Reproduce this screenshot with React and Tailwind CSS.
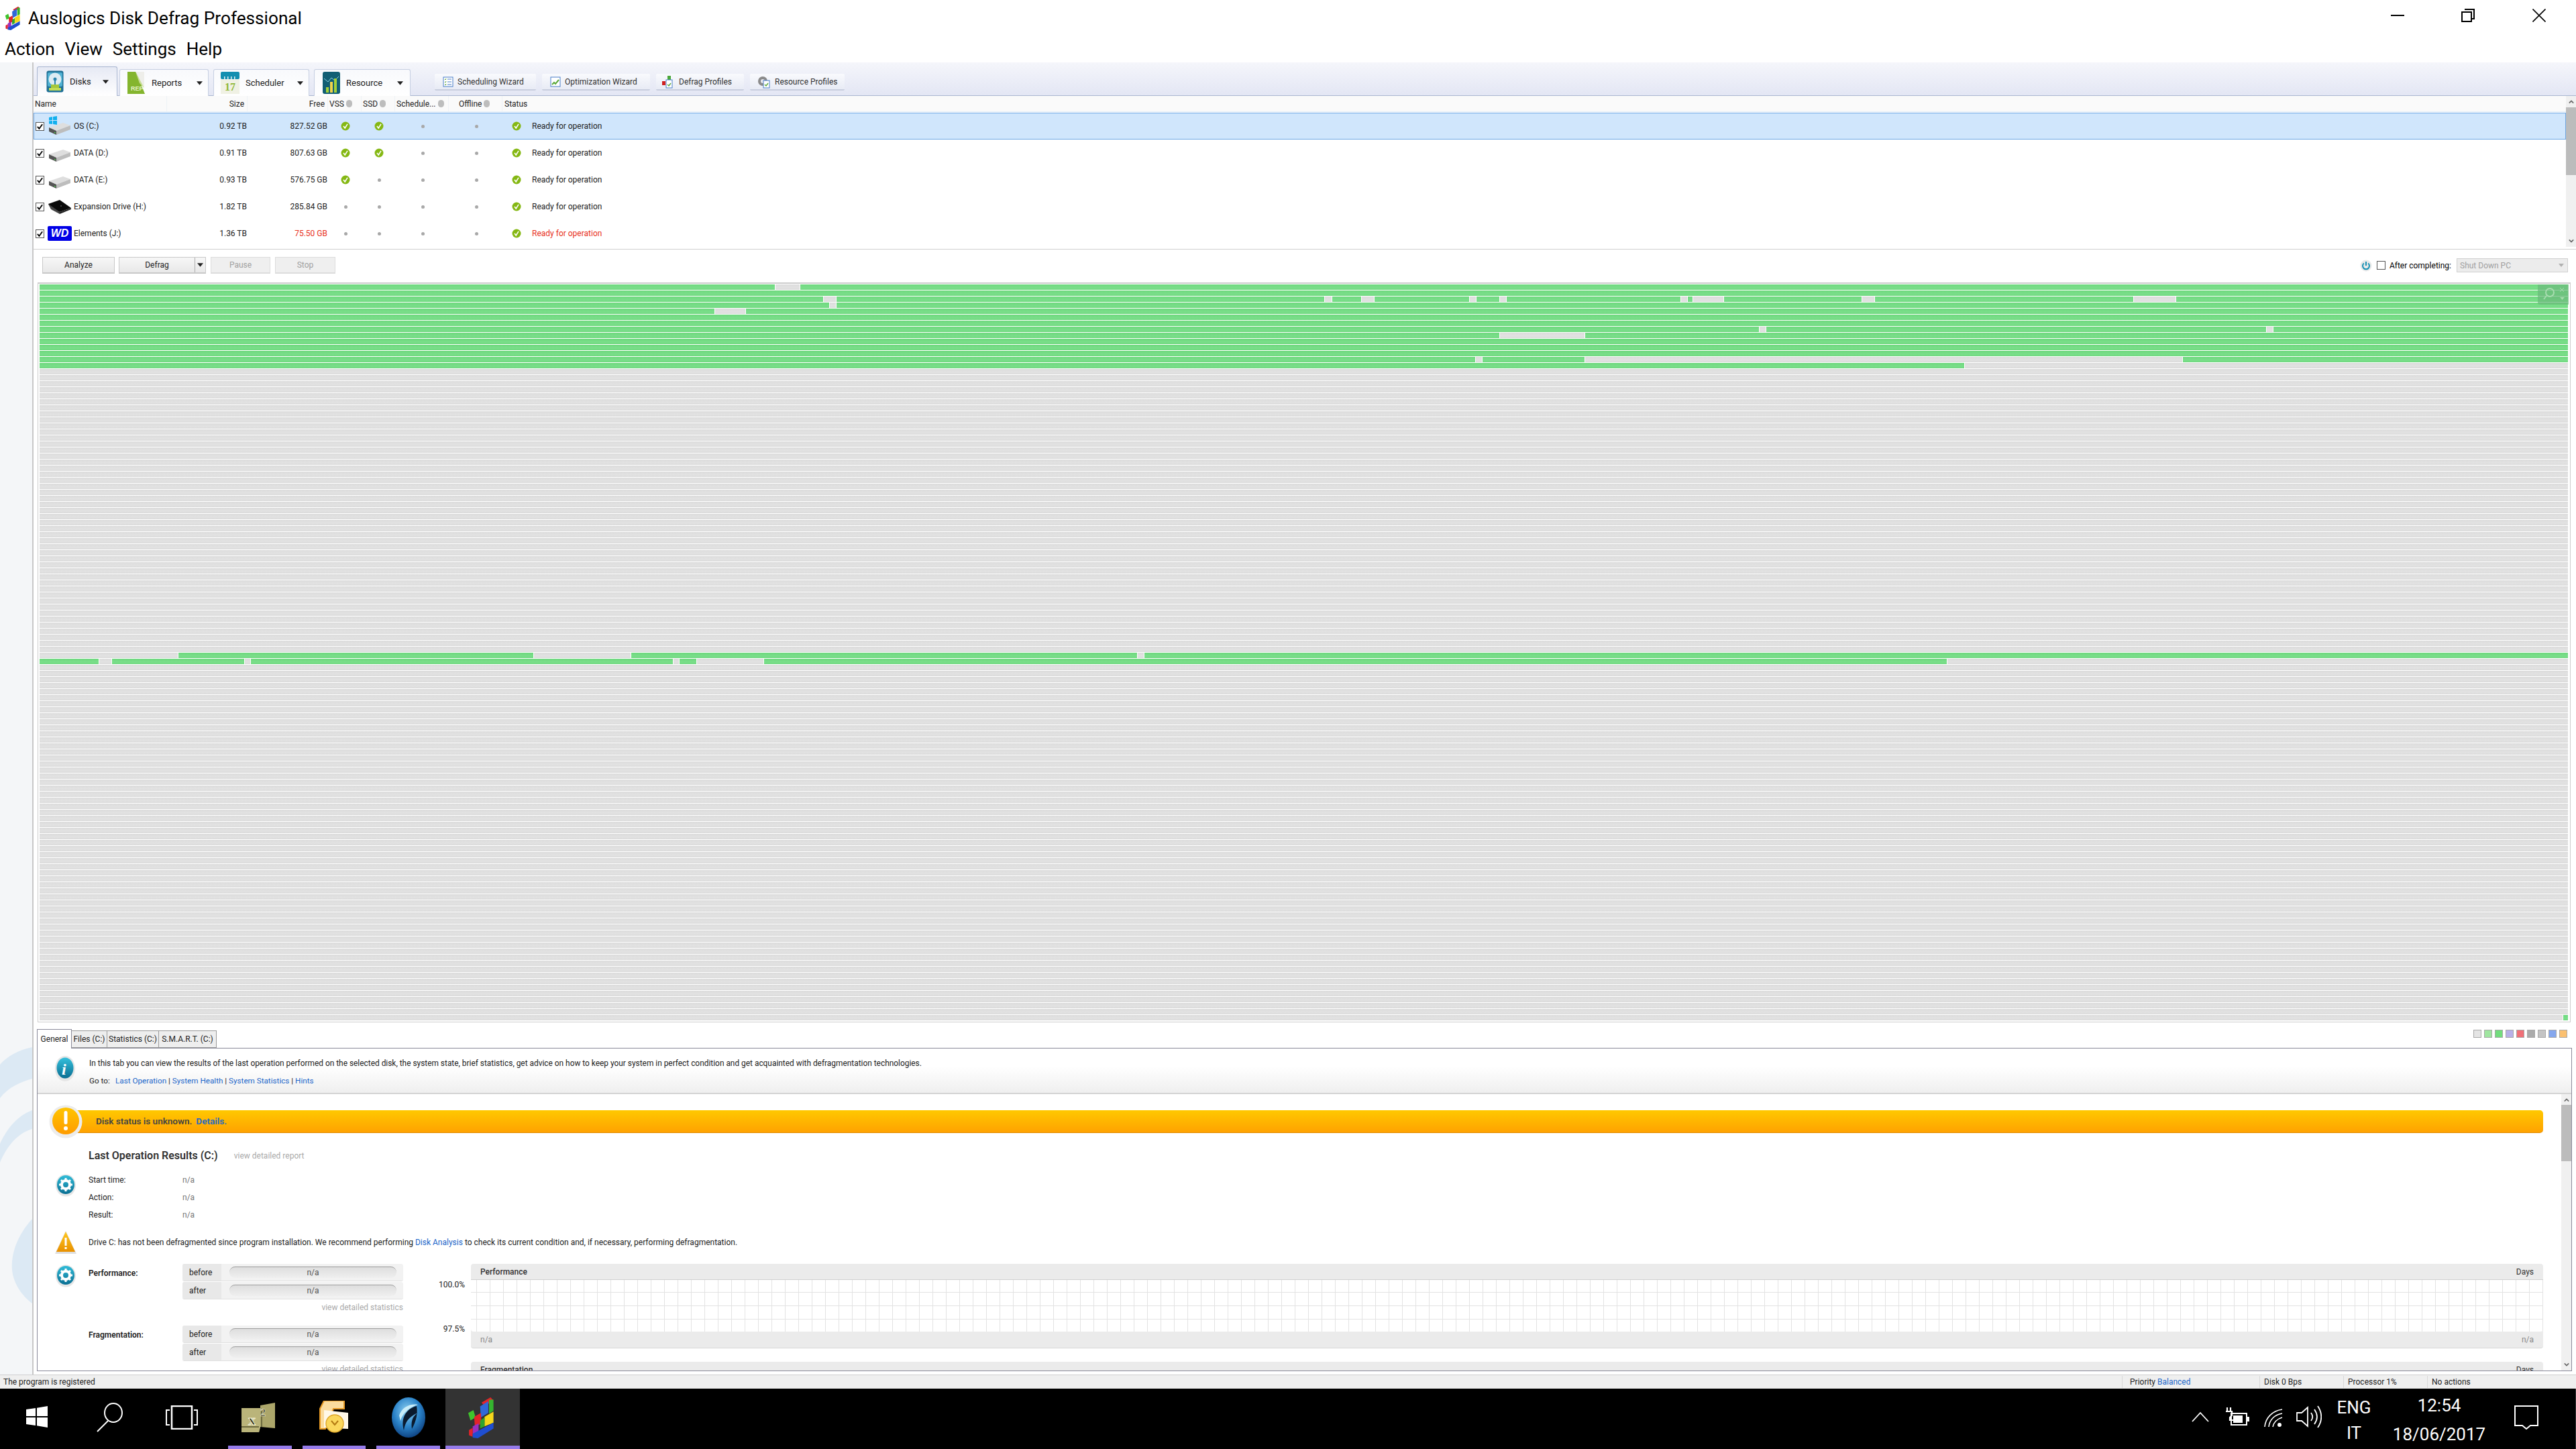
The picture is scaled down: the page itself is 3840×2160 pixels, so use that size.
import React from "react";

const GREEN = "bg-[linear-gradient(#6ed87e,#7ade8a_60%,#70d980)]";
const GRAY = "bg-[linear-gradient(#dcdcdc,#e2e2e2_60%,#dbdbdb)]";
const START = 59;
const END = 3829;

const invert = (gaps) => {
  const out = [];
  let p = START;
  gaps.forEach(([a, b]) => {
    out.push([p, a]);
    p = b;
  });
  out.push([p, END]);
  return out;
};

const gapRows = {
  0: [[1156, 1193]],
  2: [[1228, 1247], [1975, 1986], [2030, 2049], [2191, 2201], [2236, 2246], [2506, 2516], [2524, 2570], [2776, 2795], [3181, 3244]],
  3: [[1237, 1247]],
  4: [[1066, 1112]],
  7: [[2623, 2633], [3379, 3389]],
  8: [[2236, 2363]],
};

const greenRows = (i) => {
  if (i <= 11) return invert(gapRows[i] || []);
  if (i === 12) return [[59, 2200], [2210, 2363], [3254, 3829]];
  if (i === 13) return [[59, 2929]];
  if (i === 61) return [[266, 796], [941, 1696], [1706, 3829]];
  if (i === 62) return [[59, 148], [167, 365], [374, 1004], [1013, 1039], [1139, 2903]];
  if (i === 121) return [[3821, 3829]];
  return [];
};

const segments = (i) => {
  const segs = [];
  let p = START;
  greenRows(i).forEach(([a, b]) => {
    if (a > p) segs.push({ w: a - p, g: false });
    segs.push({ w: b - a, g: true });
    p = b;
  });
  if (p < END) segs.push({ w: END - p, g: false });
  return segs;
};

const rows = Array.from({ length: 122 }, (_, i) => segments(i));

function Logo({ className }) {
  return (
    <svg viewBox="0 0 40 56" className={className}>
      <polygon points="1,22 8,18 11,28 4,32" fill="#3fc42c" />
      <polygon points="19,8 31,1 35,5 23,13" fill="#e3232a" />
      <polygon points="17,13 28,6 28,22 18,28" fill="#2f68d8" />
      <polygon points="29,4 35,4 35,19 29,23" fill="#35b52f" />
      <polygon points="9,27 18,22 19,36 10,41" fill="#e3232a" />
      <polygon points="23,27 35,20 35,35 23,40" fill="#f5d71b" />
      <polygon points="17,32 23,28 23,40 17,43" fill="#2ea52c" />
      <polygon points="7,40 15,36 15,47 7,51" fill="#9a2fc0" />
      <polygon points="2,45 7,42 7,54 2,52" fill="#e3232a" />
      <polygon points="7,50 35,35 35,43 14,56 7,55" fill="#1f4ed0" />
    </svg>
  );
}

function CheckDot() {
  return (
    <svg viewBox="0 0 14 14" className="w-[14px] h-[14px] block">
      <circle cx="7" cy="7" r="6.5" fill="#85b814" />
      <path d="M4 7l2.2 3L10 3.8" fill="none" stroke="#fff" strokeWidth="1.6" />
    </svg>
  );
}

function Dash() {
  return <div className="w-[5px] h-[5px] rounded-full bg-[#a8a8a8]" />;
}

function Box({ checked }) {
  return (
    <div className="w-[13px] h-[13px] border border-[#555] bg-white flex items-center justify-center shrink-0">
      {checked && (
        <svg viewBox="0 0 12 12" className="w-[11px] h-[11px]">
          <path d="M2 6.5L4.8 9.5L10 2.5" fill="none" stroke="#000" strokeWidth="2" />
        </svg>
      )}
    </div>
  );
}

function Drive({ win }) {
  return (
    <svg viewBox="0 0 34 30" className="w-[34px] h-[30px] block">
      {win && (
        <g fill="#12b0ee">
          <polygon points="1,2 6,1 6,6 1,6.5" />
          <polygon points="7,1 13,0 13,6 7,6" />
          <polygon points="1,7.5 6,7 6,12 1,11.5" />
          <polygon points="7,7 13,7 13,13 7,12" />
        </g>
      )}
      <polygon points="1,17 22,10 33,14 12,22" fill="#dedede" />
      <polygon points="1,17 12,22 12,28 1,23" fill="#555" />
      <polygon points="12,22 33,14 33,20 12,28" fill="#bdbdbd" />
      <rect x="9" y="24" width="1.6" height="1.6" fill="#4ed24e" />
    </svg>
  );
}

function BlackDrive() {
  return (
    <svg viewBox="0 0 36 22" className="w-[36px] h-[22px] block">
      <polygon points="1,7 18,1 35,13 18,19 5,14" fill="#0a0a0a" />
      <polygon points="1,7 18,19 18,22 5,15" fill="#444" />
      <polygon points="18,19 35,13 35,15 18,22" fill="#222" />
      <circle cx="20" cy="10" r="1" fill="#555" />
    </svg>
  );
}

function WD() {
  return (
    <div className="w-[36px] h-[22px] bg-[#0000e6] rounded-[2px] flex items-center justify-center">
      <span className="text-white italic font-black text-[16px] leading-none font-['Liberation_Sans',sans-serif]">WD</span>
    </div>
  );
}

function IconDisks() {
  return (
    <svg viewBox="0 0 26 33" className="w-[26px] h-[33px] block">
      <rect x="0.5" y="0.5" width="25" height="32" rx="3" fill="#1d6f95" />
      <rect x="2" y="3" width="22" height="21" rx="2" fill="#4fb0d2" />
      <circle cx="13" cy="13" r="9.5" fill="#dcecf3" />
      <circle cx="13" cy="13" r="2.5" fill="#2d86ad" />
      <rect x="12" y="13" width="2" height="9" fill="#2d86ad" />
      <rect x="7" y="21" width="12" height="5" fill="#a5c83a" />
      <rect x="4" y="26" width="18" height="4" fill="#c3dd55" />
    </svg>
  );
}

function IconReports() {
  return (
    <svg viewBox="0 0 28 33" className="w-[28px] h-[33px] block">
      <polygon points="1,0 14,0 27,33 1,33" fill="#84b52e" />
      <polygon points="13,0 26,0 26,24" fill="#eeeeea" />
      <polygon points="13,0 26,24 19,17" fill="#c7dc94" />
      <text x="6" y="28" fontSize="9" fontWeight="700" fill="#e8f3c8" fontFamily="Liberation Sans">REP</text>
    </svg>
  );
}

function IconCal() {
  return (
    <svg viewBox="0 0 28 33" className="w-[28px] h-[33px] block">
      <rect x="0" y="11" width="28" height="22" fill="#f0f1e4" />
      <rect x="0" y="0" width="28" height="11" rx="2" fill="#148fb0" />
      <g fill="#e8f2f4">
        <rect x="5" y="7" width="1.5" height="5" />
        <rect x="10" y="7" width="1.5" height="5" />
        <rect x="15" y="7" width="1.5" height="5" />
        <rect x="20" y="7" width="1.5" height="5" />
      </g>
      <text x="6" y="28" fontSize="16" fontWeight="700" fill="#90b83a" fontFamily="Liberation Serif">17</text>
    </svg>
  );
}

function IconRes() {
  return (
    <svg viewBox="0 0 26 33" className="w-[26px] h-[33px] block">
      <rect x="0" y="0" width="26" height="33" rx="3" fill="#125f74" />
      <path d="M2 10l6 5 5-6 5 4 6-6" stroke="#8bd3e0" strokeWidth="1" fill="none" />
      <rect x="5" y="23" width="4" height="8" fill="#a5d23a" />
      <rect x="11" y="15" width="4" height="16" fill="#f2d34a" />
      <rect x="17" y="10" width="4" height="21" fill="#a5d23a" />
    </svg>
  );
}

function Caret({ className = "" }) {
  return (
    <svg viewBox="0 0 10 6" className={"w-[9px] h-[6px] block shrink-0 " + className}>
      <polygon points="0,0 10,0 5,6" fill="#222" />
    </svg>
  );
}

function MiniDoc({ kind }) {
  if (kind === "gear")
    return (
      <svg viewBox="0 0 20 20" className="w-[20px] h-[20px] block">
        <circle cx="8" cy="9" r="7" fill="#8b8b8b" />
        <circle cx="8" cy="9" r="3" fill="#e8e8ee" />
        <rect x="9" y="8" width="9" height="11" fill="#fff" stroke="#4a7fc8" />
        <path d="M11 14l2 2 3-4" stroke="#5aa83a" strokeWidth="1.4" fill="none" />
      </svg>
    );
  if (kind === "pro")
    return (
      <svg viewBox="0 0 20 20" className="w-[20px] h-[20px] block">
        <rect x="1" y="9" width="5" height="6" fill="#d02020" />
        <rect x="9" y="1" width="5" height="6" fill="#4aa83a" />
        <rect x="7" y="7" width="9" height="12" fill="#fff" stroke="#4a7fc8" />
        <path d="M9 14l2 2 3-4" stroke="#5aa83a" strokeWidth="1.4" fill="none" />
      </svg>
    );
  return (
    <svg viewBox="0 0 16 16" className="w-[16px] h-[16px] block">
      <rect x="1" y="1" width="14" height="14" fill="#fff" stroke="#4a7fc8" />
      {kind === "list" ? (
        <g stroke="#4a7fc8" strokeWidth="1">
          <path d="M7 4h6M7 8h6M7 12h6" />
          <path d="M3 4l1 1 1-2M3 8l1 1 1-2M3 12l1 1 1-2" stroke="#5aa83a" fill="none" />
        </g>
      ) : (
        <path d="M3 12l3-3 2 2 5-6" stroke="#5aa83a" strokeWidth="2" fill="none" />
      )}
    </svg>
  );
}

function Info() {
  return (
    <svg viewBox="0 0 32 40" className="w-[32px] h-[40px] block">
      <defs>
        <linearGradient id="ii" x1="0" y1="0" x2="0" y2="1">
          <stop offset="0" stopColor="#35c0dc" />
          <stop offset="1" stopColor="#0a6e92" />
        </linearGradient>
      </defs>
      <ellipse cx="16" cy="20" rx="15" ry="19" fill="#e6e6e6" />
      <ellipse cx="16" cy="19" rx="12.5" ry="15.5" fill="url(#ii)" />
      <text x="11" y="29" fontSize="24" fontWeight="700" fontStyle="italic" fill="#fff" fontFamily="Liberation Serif">i</text>
    </svg>
  );
}

function Gear({ id }) {
  return (
    <svg viewBox="0 0 32 34" className="w-[32px] h-[34px] block">
      <defs>
        <linearGradient id={id} x1="0" y1="0" x2="0" y2="1">
          <stop offset="0" stopColor="#30bcd8" />
          <stop offset="1" stopColor="#0a6e92" />
        </linearGradient>
      </defs>
      <ellipse cx="16" cy="17" rx="15" ry="16.5" fill="#e6e6e6" />
      <ellipse cx="16" cy="16" rx="13" ry="14" fill={`url(#${id})`} />
      <circle cx="16" cy="16" r="6" fill="none" stroke="#fff" strokeWidth="4" />
      <g stroke="#fff" strokeWidth="3">
        <path d="M16 6v4M16 22v4M6 16h4M22 16h4M9 9l3 3M20 20l3 3M23 9l-3 3M12 20l-3 3" />
      </g>
    </svg>
  );
}

function WarnBig() {
  return (
    <svg viewBox="0 0 50 50" className="w-[50px] h-[50px] block">
      <defs>
        <linearGradient id="wb" x1="0" y1="0" x2="0" y2="1">
          <stop offset="0" stopColor="#ffc400" />
          <stop offset="1" stopColor="#ff9c00" />
        </linearGradient>
      </defs>
      <circle cx="25" cy="25" r="24.5" fill="#ececec" />
      <circle cx="25" cy="24" r="20" fill="url(#wb)" />
      <rect x="22.5" y="9" width="5" height="20" rx="2.5" fill="#fff" />
      <circle cx="25" cy="35" r="3" fill="#fff" />
    </svg>
  );
}

function WarnTri() {
  return (
    <svg viewBox="0 0 34 34" className="w-[34px] h-[34px] block">
      <defs>
        <linearGradient id="wt" x1="0" y1="0" x2="0" y2="1">
          <stop offset="0" stopColor="#ffc820" />
          <stop offset="1" stopColor="#e89000" />
        </linearGradient>
      </defs>
      <polygon points="17,0 33,34 1,34" fill="#ddd" />
      <polygon points="17,1 31,31 3,31" fill="url(#wt)" />
      <rect x="15.5" y="10" width="3" height="12" fill="#fff" />
      <rect x="15.5" y="24" width="3" height="3" fill="#fff" />
    </svg>
  );
}

function Power() {
  return (
    <svg viewBox="0 0 18 18" className="w-[18px] h-[18px] block">
      <circle cx="9" cy="9" r="8.5" fill="#e8e8e8" />
      <path d="M5.8 5.5a5 5 0 1 0 6.4 0" fill="none" stroke="#1690b4" strokeWidth="2" />
      <path d="M9 3v6" stroke="#1690b4" strokeWidth="2" />
    </svg>
  );
}

const drives = [
  { name: "OS (C:)", size: "0.92 TB", free: "827.52 GB", vss: 1, ssd: 1, sel: 1, icon: <Drive win /> },
  { name: "DATA (D:)", size: "0.91 TB", free: "807.63 GB", vss: 1, ssd: 1, icon: <Drive /> },
  { name: "DATA (E:)", size: "0.93 TB", free: "576.75 GB", vss: 1, ssd: 0, icon: <Drive /> },
  { name: "Expansion Drive (H:)", size: "1.82 TB", free: "285.84 GB", vss: 0, ssd: 0, icon: <BlackDrive /> },
  { name: "Elements (J:)", size: "1.36 TB", free: "75.50 GB", vss: 0, ssd: 0, red: 1, icon: <WD /> },
];

function Tip() {
  return <span className="inline-block w-[9px] h-[11px] rounded-full bg-[#bdbdbd] ml-[3px] shrink-0" />;
}

function HeaderCell({ w, children, right, tip }) {
  return (
    <div className={`${w} h-full flex items-center border-r border-[#eef2f6] ${right ? "justify-end pr-[4px]" : "pl-[2px]"}`}>
      {children}
      {tip && <Tip />}
    </div>
  );
}

function DriveRow({ d }) {
  return (
    <div className={`h-[40px] flex items-center text-[12px] text-[#222] border ${d.sel ? "bg-[#d0e6fc] border-[#6fa8e4]" : "bg-white border-transparent"}`}>
      <div className="w-[59px] pl-[2px] flex items-center shrink-0">
        <Box checked />
        <div className="ml-[4px] w-[38px] flex justify-center">{d.icon}</div>
      </div>
      <div className="w-[200px] shrink-0">{d.name}</div>
      <div className="w-[58px] text-right shrink-0">{d.size}</div>
      <div className={`w-[120px] text-right shrink-0 ${d.red ? "text-[#e8301c]" : ""}`}>{d.free}</div>
      <div className="w-[54px] flex justify-center shrink-0">{d.vss ? <CheckDot /> : <Dash />}</div>
      <div className="w-[46px] flex justify-center shrink-0">{d.ssd ? <CheckDot /> : <Dash />}</div>
      <div className="w-[84px] flex justify-center shrink-0"><Dash /></div>
      <div className="w-[76px] flex justify-center shrink-0"><Dash /></div>
      <div className="w-[44px] flex justify-center shrink-0"><CheckDot /></div>
      <div className={`ml-[1px] ${d.red ? "text-[#e8301c]" : ""}`}>Ready for operation</div>
    </div>
  );
}

function ToolTab({ w, icon, label, iconW, textW, active }) {
  return (
    <div className={`${w} ${active ? "h-[44px] border-[#a9b6d0] bg-[linear-gradient(#e6e9f4,#fff)]" : "h-[40px] border-[#c6cfe2] bg-[linear-gradient(#f8f9fc,#fff)]"} border border-b-0 rounded-t-[3px] flex items-center -mb-px text-[13px] text-[#222] relative`}>
      <div className={`${iconW} flex justify-end shrink-0`}>{icon}</div>
      <div className={`${textW} pl-[9px] shrink-0`}>{label}</div>
      <Caret />
    </div>
  );
}

function WizBtn({ w, icon, label, iw }) {
  return (
    <div className={`${w} h-[25px] rounded-[2px] border-b-2 border-[#c8cede] bg-[linear-gradient(#f9fafd,#e8ebf5)] flex items-center text-[12px] text-[#333]`}>
      <div className={`${iw} flex justify-end shrink-0`}>{icon}</div>
      <div className="pl-[6px] whitespace-nowrap">{label}</div>
    </div>
  );
}

function ActBtn({ w, label, disabled, split }) {
  return (
    <div className={`${w} h-[25px] border border-[#c9c9c9] border-b-2 flex items-center text-[12px] ${disabled ? "bg-[#efefef] text-[#a0a0a0] border-[#dcdcdc]" : "bg-[linear-gradient(#f7f7f7,#e8e8e8)] text-[#222] border-[#adadad]"}`}>
      <div className="flex-1 text-center">{label}</div>
      {split && (
        <div className="w-[16px] h-full border-l border-[#adadad] flex items-center justify-center">
          <Caret />
        </div>
      )}
    </div>
  );
}

function Link({ children }) {
  return <span className="text-[#1b66c9]">{children}</span>;
}

function StatBar({ label }) {
  return (
    <div className="h-[26px] flex bg-[#f2f2f2] rounded-[3px] border-b border-[#e0e0e0]">
      <div className="w-[58px] bg-[#e8e8e8] rounded-l-[3px] pl-[10px] flex items-center text-[12px] text-[#222]">{label}</div>
      <div className="flex-1 pl-[12px] pr-[10px] flex items-center">
        <div className="w-full h-[17px] rounded-full border-t border-[#9c9c9c] bg-[linear-gradient(#dedede,#efefef)] flex items-center justify-center text-[12px] text-[#555]">n/a</div>
      </div>
    </div>
  );
}

function StatGroup({ title, link }) {
  return (
    <div className="flex">
      <div className="w-[140px] text-[12px] font-semibold text-[#222] pt-[5px]">{title}</div>
      <div className="w-[329px]">
        <StatBar label="before" />
        <div className="h-px" />
        <StatBar label="after" />
        <div className="text-right text-[12px] text-[#aaa] h-[39px] pt-[3px]">{link}</div>
      </div>
    </div>
  );
}

function Chart({ title }) {
  return (
    <div className="rounded-t-[4px] rounded-b-[4px] bg-[#ebebeb] border-b border-[#d8d8d8]">
      <div className="h-[24px] px-[14px] flex items-center justify-between text-[12px] text-[#333] border-b border-[#d0d0d0]">
        <span className="font-medium">{title}</span>
        <span>Days</span>
      </div>
      <div className="h-[77px] bg-white rounded-b-[4px] bg-[linear-gradient(to_right,#e3e3e3_1px,transparent_1px),linear-gradient(to_bottom,#e3e3e3_1px,transparent_1px)] bg-[size:20px_20px] bg-[position:8px_18px]" />
      <div className="h-[24px] px-[14px] flex items-center justify-between text-[12px] text-[#888]">
        <span>n/a</span>
        <span>n/a</span>
      </div>
    </div>
  );
}

function TaskBtn({ children, open, active, shift = "" }) {
  return (
    <div className={`w-[110.67px] h-full flex flex-col shrink-0 ${active ? "bg-[#333]" : ""}`}>
      <div className={`flex-1 flex items-center justify-center ${shift}`}>{children}</div>
      <div className={`h-[5px] ${open ? "bg-[#967bea]" : ""} ${active ? "" : open ? "mx-[8px]" : ""}`} />
    </div>
  );
}

const legend = ["#e4e4e4", "#a0e5a0", "#72dc7d", "#b8b0e8", "#f07078", "#ababab", "#c4c4c4", "#85a7ee", "#fbc070"];

export default function App() {
  return (
    <div className="w-[3840px] h-[2160px] flex flex-col bg-white overflow-hidden font-['Roboto','Noto_Sans',sans-serif] text-[#222]">
      {/* title + menu */}
      <div className="h-[93px] shrink-0 flex flex-col">
        <div className="h-[54px] flex items-center">
          <Logo className="w-[32px] h-[36px] ml-[4px] mr-[6px] shrink-0" />
          <div className="text-[26.2px] leading-none text-black">Auslogics Disk Defrag Professional</div>
          <div className="ml-auto flex items-center pr-[45px] mb-[8px]">
            <div className="w-[20px] h-[2px] bg-black" />
            <svg viewBox="0 0 20 20" className="w-[20px] h-[20px] ml-[85px]">
              <path d="M5 1h14v14h-3M1 5h14v14H1z" fill="none" stroke="#000" strokeWidth="2" />
            </svg>
            <svg viewBox="0 0 20 20" className="w-[20px] h-[20px] ml-[86px]">
              <path d="M0.5 0.5l19 19M19.5 0.5l-19 19" stroke="#000" strokeWidth="1.6" />
            </svg>
          </div>
        </div>
        <div className="flex pl-[7px] gap-[15px] text-[26px] leading-[39px] text-black">
          <span>Action</span>
          <span>View</span>
          <span>Settings</span>
          <span>Help</span>
        </div>
      </div>

      <div className="h-[1956px] shrink-0 flex">
        {/* left strip */}
        <div className="w-[50px] shrink-0 bg-[#f4f6f8] border-r-2 border-[#c8c8c8] relative overflow-hidden">
          <svg viewBox="0 0 48 1956" className="absolute inset-0 w-[48px] h-[1956px]">
            <g fill="#dce9f4">
              <path d="M48 1468C28 1472 10 1482 0 1494V1544C12 1528 30 1520 48 1515Z" />
              <path d="M48 1562C26 1570 10 1590 0 1612V1640C10 1616 26 1596 48 1590Z" />
              <path d="M48 1724C26 1748 16 1776 18 1800C20 1820 32 1838 48 1850Z" />
            </g>
          </svg>
        </div>

        <div className="flex-1 min-w-0 flex flex-col">
          {/* toolbar */}
          <div className="h-[50px] shrink-0 bg-[linear-gradient(#f5f6fb,#e3e6f4)] border-b border-[#a9b6d0] flex items-end pl-[5px]">
            <ToolTab w="w-[120px]" active icon={<IconDisks />} label="Disks" iconW="w-[39px]" textW="w-[58px]" />
            <div className="w-[3px]" />
            <ToolTab w="w-[133px]" icon={<IconReports />} label="Reports" iconW="w-[38px]" textW="w-[76px]" />
            <div className="w-[7px]" />
            <ToolTab w="w-[143px]" icon={<IconCal />} label="Scheduler" iconW="w-[38px]" textW="w-[86px]" />
            <div className="w-[7px]" />
            <ToolTab w="w-[144px]" icon={<IconRes />} label="Resource" iconW="w-[38px]" textW="w-[85px]" />
            <div className="flex gap-[9px] ml-[36px] self-start mt-[17px]">
              <WizBtn w="w-[151px]" iw="w-[28px]" icon={<MiniDoc kind="list" />} label="Scheduling Wizard" />
              <WizBtn w="w-[161px]" iw="w-[28px]" icon={<MiniDoc kind="up" />} label="Optimization Wizard" />
              <WizBtn w="w-[131px]" iw="w-[28px]" icon={<MiniDoc kind="pro" />} label="Defrag Profiles" />
              <WizBtn w="w-[141px]" iw="w-[31px]" icon={<MiniDoc kind="gear" />} label="Resource Profiles" />
            </div>
          </div>

          {/* drive list */}
          <div className="h-[229px] shrink-0 flex border-b border-[#cfcfcf]">
            <div className="flex-1 min-w-0">
              <div className="h-[24px] mb-px bg-[#fafafa] border-b border-[#e3eef8] flex text-[12px] text-[#222] items-center">
                <HeaderCell w="w-[199px]">Name</HeaderCell>
                <HeaderCell w="w-[120px]" right>Size</HeaderCell>
                <HeaderCell w="w-[120px]" right>Free</HeaderCell>
                <HeaderCell w="w-[50px]" tip>VSS</HeaderCell>
                <HeaderCell w="w-[50px]" tip>SSD</HeaderCell>
                <HeaderCell w="w-[80px]" tip>Schedule...</HeaderCell>
                <HeaderCell w="w-[80px]"><span className="pl-[13px]">Offline</span><Tip /></HeaderCell>
                <div className="pl-[3px]">Status</div>
              </div>
              {drives.map((d) => (
                <DriveRow key={d.name} d={d} />
              ))}
            </div>
            <div className="w-[15px] shrink-0 h-[225px] bg-[#f0f0f0] flex flex-col items-center">
              <svg viewBox="0 0 10 6" className="w-[8px] h-[6px] mt-[6px] mb-[5px]"><path d="M1 5l4-4 4 4" fill="none" stroke="#666" strokeWidth="2" /></svg>
              <div className="w-full h-[101px] bg-[#bcbcbc]" />
              <svg viewBox="0 0 10 6" className="w-[8px] h-[6px] mt-auto mb-[6px]"><path d="M1 1l4 4 4-4" fill="none" stroke="#666" strokeWidth="2" /></svg>
            </div>
          </div>

          {/* action buttons */}
          <div className="h-[49px] shrink-0 flex items-start pt-[11px] pl-[13px] pr-[12px]">
            <ActBtn w="w-[108px]" label="Analyze" />
            <div className="w-[6px]" />
            <ActBtn w="w-[130px]" label="Defrag" split />
            <div className="w-[7px]" />
            <ActBtn w="w-[89px]" label="Pause" disabled />
            <div className="w-[7px]" />
            <ActBtn w="w-[90px]" label="Stop" disabled />
            <div className="ml-auto flex items-center h-[25px]">
              <Power />
              <div className="ml-[7px]"><Box /></div>
              <div className="ml-[6px] text-[12px] text-black">After completing:</div>
              <div className="ml-[8px] w-[166px] h-[21px] bg-[#ececec] border border-[#d0d0d0] flex items-center pl-[4px] text-[12px] text-[#a0a0a0]">
                <span>Shut Down PC</span>
                <svg viewBox="0 0 10 6" className="w-[8px] h-[5px] ml-auto mr-[5px]"><polygon points="0,0 10,0 5,6" fill="#b0b0b0" /></svg>
              </div>
            </div>
          </div>

          {/* cluster map */}
          <div className="ml-[6px] mr-[8px] w-[3776px] h-[1103px] shrink-0 border border-[#ccc] border-t-2 pt-[1px] pl-[2px] relative">
            {rows.map((r, i) => (
              <div key={i} className="flex h-[8px] mb-px">
                {r.map((s, j) => (
                  <div key={j} style={{ width: s.w }} className={`h-full border-r border-white ${s.g ? GREEN : GRAY}`} />
                ))}
              </div>
            ))}
            <div className="absolute top-[1px] right-[2px] w-[46px] h-[30px] rounded-bl-[3px] bg-[#69b97a]/70 flex items-center justify-center">
              <svg viewBox="0 0 46 30" className="w-[46px] h-[30px]">
                <circle cx="18" cy="12" r="6" fill="none" stroke="#a6dcae" strokeWidth="2" />
                <path d="M13 17L9 22" stroke="#a6dcae" strokeWidth="2" />
                <path d="M33 5l6 6M39 5l-6 6" stroke="#a6dcae" strokeWidth="1" />
                <polygon points="33,19 40,19 36.5,23" fill="#a6dcae" />
              </svg>
            </div>
          </div>

          {/* tabs + legend */}
          <div className="h-[38px] shrink-0 flex items-end pl-[5px] pr-[13px] relative">
            <div className="w-[52px] h-[29px] border border-b-0 border-[#8a8a9a] bg-white text-[12px] flex items-center justify-center -mb-px z-10">General</div>
            <div className="w-[53px] h-[26px] border border-l-0 border-[#9a9a9a] bg-[#eeeeee] text-[12px] flex items-center justify-center">Files (C:)</div>
            <div className="w-[77px] h-[26px] border border-l-0 border-[#9a9a9a] bg-[#eeeeee] text-[12px] flex items-center justify-center">Statistics (C:)</div>
            <div className="w-[86px] h-[26px] border border-l-0 border-[#9a9a9a] bg-[#eeeeee] text-[12px] flex items-center justify-center">S.M.A.R.T. (C:)</div>
            <div className="ml-auto flex gap-[4px] self-start mt-[11px]">
              {legend.map((c) => (
                <div key={c} className="w-[12px] h-[12px] border border-[#a8a8a8]" style={{ backgroundColor: c }} />
              ))}
            </div>
          </div>

          {/* panel */}
          <div className="ml-[5px] w-[3779px] h-[482px] shrink-0 border border-[#8a8a9a] flex flex-col overflow-hidden">
            <div className="h-[68px] shrink-0 flex bg-[linear-gradient(#fff_40%,#efefef)] border-b-2 border-[#d4d4d4]">
              <div className="w-[77px] flex justify-center items-center pl-[5px] shrink-0 pb-[6px]"><Info /></div>
              <div className="text-[11.9px] text-[#222]">
                <div className="h-[46px] flex items-center">In this tab you can view the results of the last operation performed on the selected disk, the system state, brief statistics, get advice on how to keep your system in perfect condition and get acquainted with defragmentation technologies.</div>
                <div className="flex -mt-[6px] text-[11.7px]">
                  <span className="w-[39px]">Go to:</span>
                  <span>
                    <Link>Last Operation</Link> | <Link>System Health</Link> | <Link>System Statistics</Link> | <Link>Hints</Link>
                  </span>
                </div>
              </div>
            </div>
            <div className="flex-1 min-h-0 flex">
              <div className="flex-1 min-w-0 overflow-hidden">
                <div className="ml-[44px] mt-[24px] w-[3691px] h-[34px] relative bg-[linear-gradient(#ffc800,#ffa200)] border-b border-[#e08a00] rounded-r-[5px] flex items-center pl-[43px] text-[13.5px] font-semibold text-[#444]">
                  <div className="absolute left-[-27px] top-[-8px]"><WarnBig /></div>
                  <span>Disk status is unknown.</span>
                  <span className="ml-[6px] text-[#1b66c9]">Details.</span>
                </div>
                <div className="ml-[76px] mt-[24px] h-[20px] flex items-center">
                  <span className="text-[16px] font-semibold text-[#333]">Last Operation Results (C:)</span>
                  <span className="ml-[24px] text-[12px] text-[#aaa]">view detailed report</span>
                </div>
                <div className="mt-[13px] flex">
                  <div className="w-[76px] flex justify-center pl-[8px] pt-[4px]"><Gear id="g1" /></div>
                  <div className="text-[12px]">
                    {[["Start time:"], ["Action:"], ["Result:"]].map(([k]) => (
                      <div key={k} className="h-[26px] flex items-center">
                        <span className="w-[140px]">{k}</span>
                        <span className="text-[#777]">n/a</span>
                      </div>
                    ))}
                  </div>
                </div>
                <div className="mt-[11px] h-[34px] flex items-center">
                  <div className="w-[76px] flex justify-center pl-[8px]"><WarnTri /></div>
                  <div className="text-[12px]">
                    Drive C: has not been defragmented since program installation. We recommend performing <Link>Disk Analysis</Link> to check its current condition and, if necessary, performing defragmentation.
                  </div>
                </div>
                <div className="mt-[15px] flex">
                  <div className="w-[76px] flex justify-center pl-[8px] pt-[1px] shrink-0"><div><Gear id="g2" /></div></div>
                  <div className="w-[469px] shrink-0 flex flex-col">
                    <StatGroup title="Performance:" link="view detailed statistics" />
                    <StatGroup title="Fragmentation:" link="view detailed statistics" />
                  </div>
                  <div className="w-[92px] shrink-0 h-[106px] pt-[22px] text-[12px] text-right flex flex-col justify-between">
                    <span>100.0%</span>
                    <span>97.5%</span>
                  </div>
                  <div className="ml-[9px] w-[3089px] shrink-0 flex flex-col gap-[20px]">
                    <Chart title="Performance" />
                    <Chart title="Fragmentation" />
                  </div>
                </div>
              </div>
              <div className="w-[15px] shrink-0 bg-[#f0f0f0] flex flex-col items-center">
                <svg viewBox="0 0 10 6" className="w-[8px] h-[6px] mt-[6px] mb-[4px]"><path d="M1 5l4-4 4 4" fill="none" stroke="#666" strokeWidth="2" /></svg>
                <div className="w-full h-[84px] bg-[#bcbcbc]" />
                <svg viewBox="0 0 10 6" className="w-[8px] h-[6px] mt-auto mb-[6px]"><path d="M1 1l4 4 4-4" fill="none" stroke="#666" strokeWidth="2" /></svg>
              </div>
            </div>
          </div>
          <div className="flex-1" />
        </div>
      </div>

      {/* status bar */}
      <div className="h-[21px] shrink-0 bg-[#efefef] border-t border-[#d0d0d0] flex items-center text-[12px] text-[#222]">
        <div className="w-[3163px] pl-[5px]">The program is registered</div>
        <div className="w-[205px] pl-[11px] border-l border-[#d8d8d8]">Priority <span className="text-[#1b66c9]">Balanced</span></div>
        <div className="w-[125px] pl-[6px] border-l border-[#d8d8d8]">Disk 0 Bps</div>
        <div className="w-[125px] pl-[6px] border-l border-[#d8d8d8]">Processor 1%</div>
        <div className="flex-1 pl-[6px] border-l border-[#d8d8d8]">No actions</div>
      </div>

      {/* taskbar */}
      <div className="h-[90px] shrink-0 bg-black flex text-white">
        <TaskBtn>
          <svg viewBox="0 0 32 32" className="w-[32px] h-[32px] mb-[1px]">
            <polygon points="0,5 14,3 14,15 0,15" fill="#fff" />
            <polygon points="16,2.7 32,0 32,15 16,15" fill="#fff" />
            <polygon points="0,17 14,17 14,29 0,27" fill="#fff" />
            <polygon points="16,17 32,17 32,32 16,29.3" fill="#fff" />
          </svg>
        </TaskBtn>
        <TaskBtn shift="pr-[6px]">
          <svg viewBox="0 0 40 44" className="w-[40px] h-[44px]">
            <ellipse cx="26" cy="15" rx="13" ry="14" fill="none" stroke="#fff" strokeWidth="2" />
            <path d="M18 27L2 43" stroke="#fff" strokeWidth="2" />
          </svg>
        </TaskBtn>
        <TaskBtn shift="pr-[12px]">
          <svg viewBox="0 0 48 36" className="w-[48px] h-[36px]">
            <rect x="9" y="1" width="30" height="34" fill="none" stroke="#fff" strokeWidth="2.5" />
            <path d="M6 7H1v22h5M42 7h5v22h-5" fill="none" stroke="#fff" strokeWidth="2" />
          </svg>
        </TaskBtn>
        <TaskBtn open shift="pr-[4px]">
          <svg viewBox="0 0 50 44" className="w-[50px] h-[44px]">
            <polygon points="0,8 28,8 28,4 50,0 50,38 28,36 26,44 0,44" fill="#aca66a" />
            <polygon points="0,8 28,8 28,36 26,44 0,44" fill="#bab47a" />
            <path d="M30 8v28M0 36h26" stroke="#6d6a3e" strokeWidth="2" />
            <text x="10" y="33" fontSize="22" fontWeight="700" fill="#22220f" stroke="#f5f3d8" strokeWidth="0.8" fontFamily="Liberation Serif">x</text>
            <text x="28" y="20" fontSize="16" fontWeight="700" fill="#22220f" stroke="#f5f3d8" strokeWidth="0.6" fontFamily="Liberation Serif">2</text>
          </svg>
        </TaskBtn>
        <TaskBtn open>
          <svg viewBox="0 0 46 50" className="w-[46px] h-[50px]">
            <path d="M8 0h30v12H22L10 42H2V12Z" fill="#fbdc9e" stroke="#e89a24" strokeWidth="2" />
            <polygon points="8,14 44,18 44,42 8,40" fill="#fff8e8" />
            <circle cx="24" cy="34" r="13" fill="#fbd75c" stroke="#dfa82b" strokeWidth="1.5" />
            <path d="M19 30l5 6 5-6" fill="none" stroke="#b37a12" strokeWidth="2" />
          </svg>
        </TaskBtn>
        <TaskBtn open>
          <svg viewBox="0 0 52 62" className="w-[52px] h-[62px]">
            <defs>
              <radialGradient id="orb" cx="0.45" cy="0.35" r="0.7">
                <stop offset="0" stopColor="#8fd2f2" />
                <stop offset="0.55" stopColor="#2a82c8" />
                <stop offset="1" stopColor="#0b3a78" />
              </radialGradient>
            </defs>
            <ellipse cx="26" cy="31" rx="25" ry="30" fill="url(#orb)" />
            <path d="M38 14C22 18 14 32 19 50C21 38 26 30 40 24C30 30 30 40 31 48C38 36 40 24 38 14Z" fill="#0a1a2e" />
            <path d="M12 28C16 16 28 10 40 12C28 16 18 22 14 36Z" fill="#c8ecf8" />
          </svg>
        </TaskBtn>
        <TaskBtn open active>
          <Logo className="w-[48px] h-[62px]" />
        </TaskBtn>

        <div className="flex-1" />

        <div className="w-[58px] flex items-center justify-center mb-[6px]">
          <svg viewBox="0 0 26 16" className="w-[26px] h-[16px]"><path d="M1 15L13 2l12 13" fill="none" stroke="#fff" strokeWidth="1.8" /></svg>
        </div>
        <div className="w-[52px] flex items-center justify-center mb-[6px]">
          <svg viewBox="0 0 36 28" className="w-[36px] h-[28px]">
            <path d="M3 0v6M8 0v6M1 6h9v6l-3 3v4h5M12 19" fill="none" stroke="#fff" strokeWidth="2.2" />
            <rect x="9" y="9" width="23" height="17" fill="none" stroke="#fff" strokeWidth="2" />
            <rect x="12" y="12" width="14" height="11" fill="#fff" />
            <rect x="33" y="14" width="3" height="7" fill="#fff" />
          </svg>
        </div>
        <div className="w-[56px] flex items-center justify-center mb-[2px]">
          <svg viewBox="0 0 28 28" className="w-[28px] h-[28px]">
            <path d="M1 27C2 14 12 3 27 1M7 27C8 17 15 9 27 7M13 27C14 21 19 15 27 13" fill="none" stroke="#fff" strokeWidth="1.6" />
            <circle cx="23" cy="24" r="3" fill="#fff" />
          </svg>
        </div>
        <div className="w-[50px] flex items-center justify-center mb-[6px]">
          <svg viewBox="0 0 38 34" className="w-[38px] h-[34px]">
            <path d="M1 11h7L17 3v28l-9-8H1Z" fill="none" stroke="#fff" strokeWidth="1.8" />
            <path d="M22 11c3 4 3 8 0 12M27 6c5 7 5 15 0 22M32 1c7 10 7 22 0 32" fill="none" stroke="#fff" strokeWidth="1.8" />
          </svg>
        </div>
        <div className="w-[84px] flex flex-col items-center pt-[9px] text-[26px] leading-[38px]">
          <span>ENG</span>
          <span>IT</span>
        </div>
        <div className="w-[170px] flex flex-col items-center pt-[4px] text-[26px] leading-[43px]">
          <span>12:54</span>
          <span>18/06/2017</span>
        </div>
        <div className="w-[90px] flex items-center justify-center mb-[4px]">
          <svg viewBox="0 0 36 36" className="w-[36px] h-[36px]">
            <path d="M1 1h34v29H24l-6 5-6-5H1Z" fill="none" stroke="#fff" strokeWidth="2" />
          </svg>
        </div>
        <div className="w-[28px]" />
        <div className="w-px bg-[#3a3a3a]" />
      </div>
    </div>
  );
}
